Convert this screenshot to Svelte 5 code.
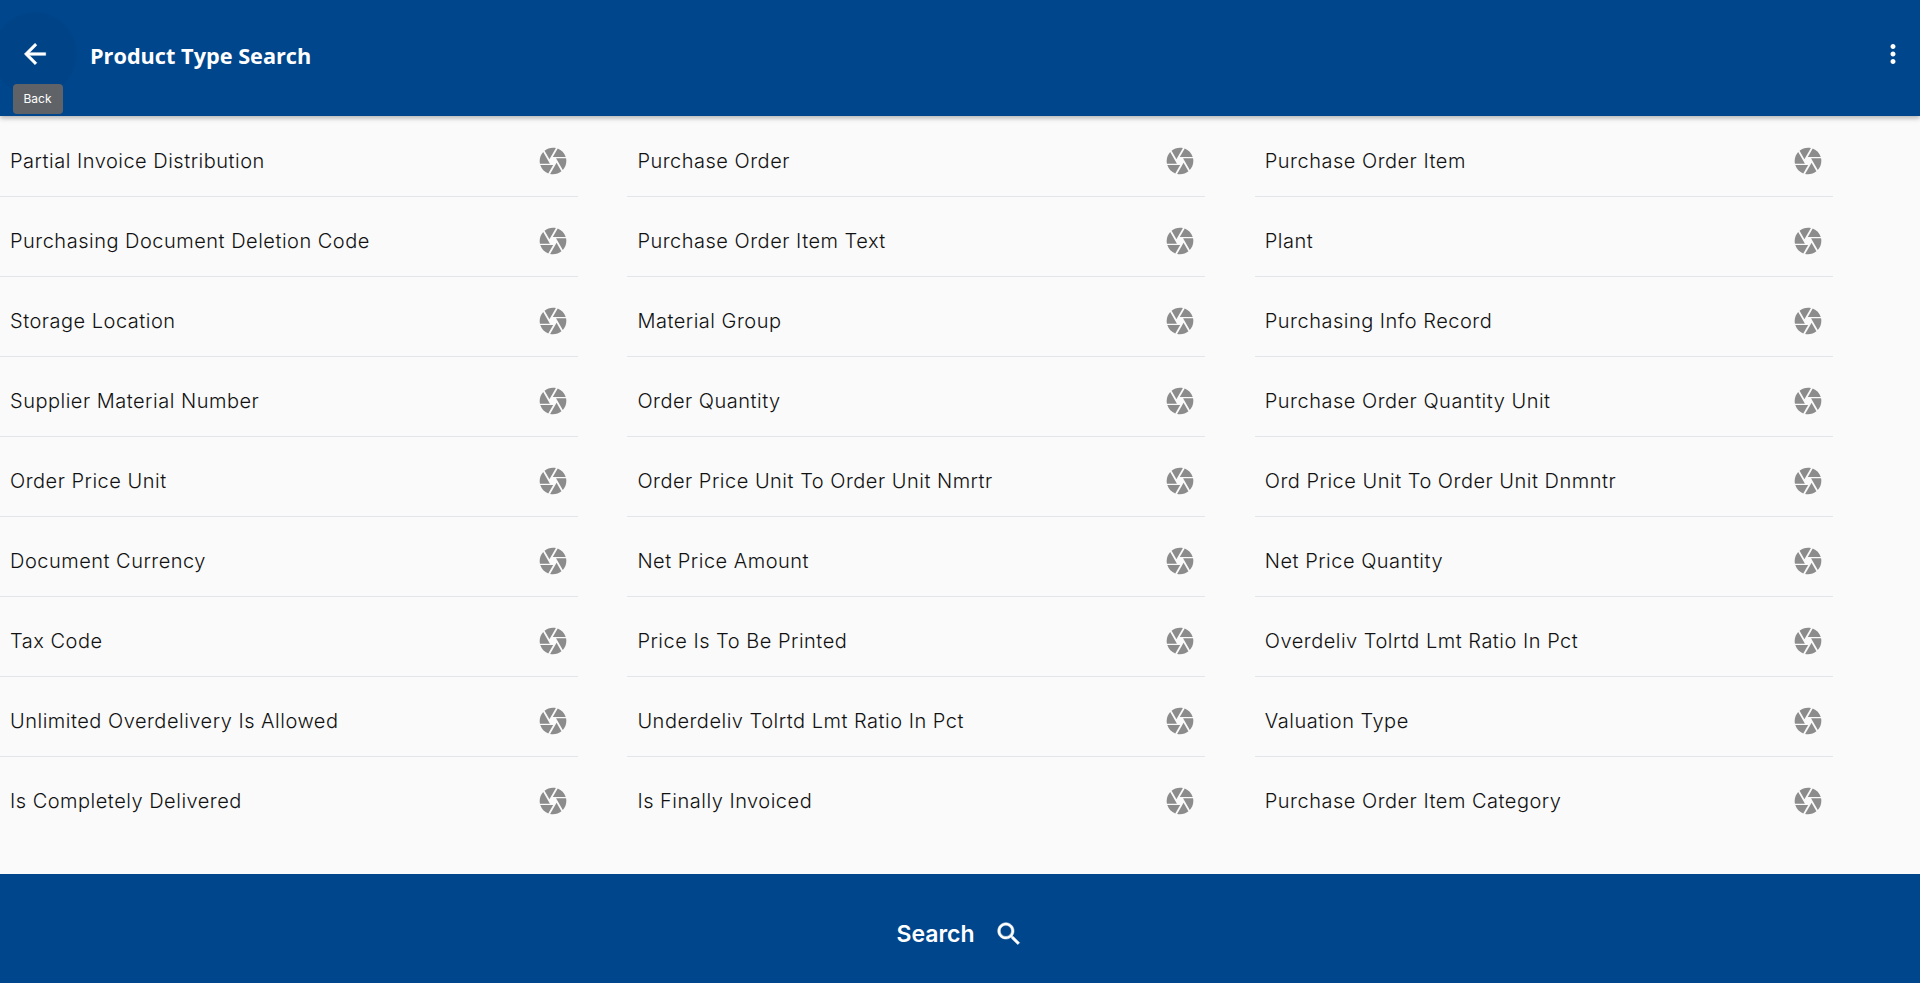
<script>
  const fields = [
    "Partial Invoice Distribution", "Purchase Order", "Purchase Order Item",
    "Purchasing Document Deletion Code", "Purchase Order Item Text", "Plant",
    "Storage Location", "Material Group", "Purchasing Info Record",
    "Supplier Material Number", "Order Quantity", "Purchase Order Quantity Unit",
    "Order Price Unit", "Order Price Unit To Order Unit Nmrtr", "Ord Price Unit To Order Unit Dnmntr",
    "Document Currency", "Net Price Amount", "Net Price Quantity",
    "Tax Code", "Price Is To Be Printed", "Overdeliv Tolrtd Lmt Ratio In Pct",
    "Unlimited Overdelivery Is Allowed", "Underdeliv Tolrtd Lmt Ratio In Pct", "Valuation Type",
    "Is Completely Delivered", "Is Finally Invoiced", "Purchase Order Item Category"
  ];
</script>

<div class="page">
  <header class="toolbar">
    <div class="back">
      <span class="back-circle">
        <svg viewBox="0 0 24 24" width="32" height="32"><path fill="#fff" stroke="#fff" stroke-width="0.4" d="M20 11H7.83l5.59-5.59L12 4l-8 8 8 8 1.41-1.41L7.83 13H20v-2z" /></svg>
      </span>
      <span class="tooltip">Back</span>
    </div>
    <h1>Product Type Search</h1>
    <span class="more">
      <svg viewBox="0 0 24 24" width="30" height="30"><path fill="#fff" d="M12 8c1.1 0 2-.9 2-2s-.9-2-2-2-2 .9-2 2 .9 2 2 2zm0 2c-1.1 0-2 .9-2 2s.9 2 2 2 2-.9 2-2-.9-2-2-2zm0 6c-1.1 0-2 .9-2 2s.9 2 2 2 2-.9 2-2-.9-2-2-2z" /></svg>
    </span>
  </header>

  <main class="grid">
    {#each fields as name, i}
      <div class="row" class:last={i >= 24}>
        <span class="label">{name}</span>
        <svg class="camera" viewBox="0 0 24 24" width="32" height="32"><path fill="#8c8c8c" d="M9.4 10.5l4.77-8.26C13.47 2.09 12.75 2 12 2c-2.4 0-4.6.85-6.32 2.25l3.66 6.35.06-.1zM21.54 9c-.92-2.92-3.15-5.26-6-6.34L11.88 9h9.66zm.26 1h-7.49l.29.5 4.76 8.25C21 16.97 22 14.61 22 12c0-.69-.07-1.35-.2-2zM8.54 12l-3.9-6.75C3.01 7.03 2 9.39 2 12c0 .69.07 1.35.2 2h7.49l-1.15-2zm-6.08 3c.92 2.92 3.15 5.26 6 6.34L12.12 15H2.46zm11.27 0l-3.9 6.76c.7.15 1.42.24 2.17.24 2.4 0 4.6-.85 6.32-2.25l-3.66-6.35-.93 1.6z" /></svg>
      </div>
    {/each}
  </main>

  <footer class="footer">
    <span class="search">Search</span>
    <svg viewBox="0 0 24 24" width="30" height="30"><path fill="#fff" stroke="#fff" stroke-width="0.4" d="M15.5 14h-.79l-.28-.27C15.41 12.59 16 11.11 16 9.5 16 5.91 13.09 3 9.5 3S3 5.91 3 9.5 5.91 16 9.5 16c1.61 0 3.09-.59 4.23-1.57l.27.28v.79l5 4.99L20.49 19l-4.99-5zm-6 0C7.01 14 5 11.99 5 9.5S7.01 5 9.5 5 14 7.01 14 9.5 11.99 14 9.5 14z" /></svg>
  </footer>
</div>

<style>
  :global(body) {
    margin: 0;
    background: #fafafa;
  }

  .page {
    height: 983px;
    display: flex;
    flex-direction: column;
    overflow: hidden;
    font-family: Inter, "Liberation Sans", sans-serif;
  }

  .toolbar {
    height: 116px;
    flex: none;
    display: flex;
    align-items: center;
    background: #00468c;
    color: #fff;
    box-shadow: 0 2px 5px rgba(0, 0, 0, 0.3);
    position: relative;
    z-index: 1;
  }

  .back {
    width: 90px;
    height: 100%;
    flex: none;
    position: relative;
  }

  .back-circle {
    position: absolute;
    left: -7px;
    top: 12px;
    width: 84px;
    height: 84px;
    border-radius: 50%;
    background: rgba(0, 0, 0, 0.03);
    display: flex;
    align-items: center;
    justify-content: center;
  }

  .tooltip {
    position: absolute;
    left: 12.5px;
    top: 84px;
    width: 50px;
    height: 30px;
    border-radius: 4px;
    background: #5f6368;
    font-size: 12px;
    line-height: 30px;
    text-align: center;
  }

  h1 {
    margin: 0 0 6px;
    font-family: "Open Sans", sans-serif;
    font-size: 21.7px;
    font-weight: 700;
  }

  .more {
    margin-left: auto;
    margin-right: 12px;
    margin-bottom: 8px;
    display: flex;
  }

  .grid {
    flex: 1;
    display: grid;
    grid-template-columns: repeat(3, 578px);
    column-gap: 49.4px;
    grid-auto-rows: 80px;
    align-content: start;
    padding-top: 1px;
  }

  .row {
    display: flex;
    align-items: center;
    justify-content: space-between;
    padding: 8px 10px 0;
    border-bottom: 1px solid #e2e6ea;
    box-sizing: border-box;
    color: #111;
  }

  .row.last {
    border-bottom: none;
  }

  .label {
    font-size: 20px;
    font-weight: 300;
    letter-spacing: 0.5px;
  }

  .camera {
    margin-right: -1px;
  }

  .footer {
    height: 109px;
    flex: none;
    display: flex;
    align-items: center;
    justify-content: center;
    gap: 19px;
    background: #00468c;
    color: #fff;
    padding-top: 11px;
    box-sizing: border-box;
  }

  .search {
    font-size: 23px;
    font-weight: 600;
  }
</style>
